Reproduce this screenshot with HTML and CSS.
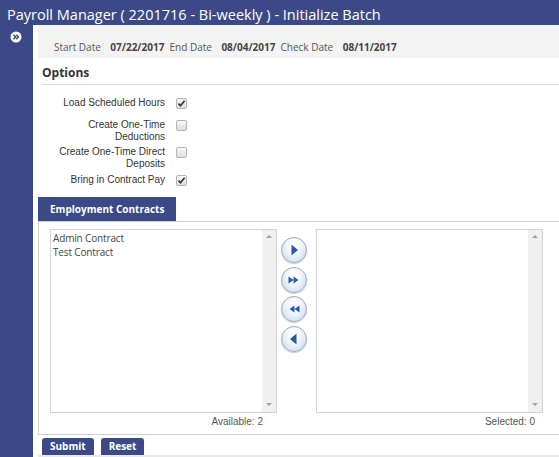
FILE: index.html
```html
<!DOCTYPE html>
<html>
<head>
<meta charset="utf-8">
<link rel="stylesheet" href="styles.css">
</head>
<body>
<div class="header">Payroll Manager ( 2201716 - Bi-weekly ) - Initialize Batch</div>
<div class="main">
  <div class="sidebar">
    <svg class="expand" width="12" height="12" viewBox="0 0 12 12"><circle cx="6" cy="6" r="5.5" fill="#fff"/><path d="M3.4 3.8 L5.6 6 L3.4 8.2 M6.2 3.8 L8.4 6 L6.2 8.2" stroke="#3b4a86" stroke-width="1.5" fill="none"/></svg>
  </div>
  <div class="content">
    <div class="dates">
      <span class="dlabel">Start Date</span><span class="dval">07/22/2017</span>
      <span class="dlabel">End Date</span><span class="dval">08/04/2017</span>
      <span class="dlabel">Check Date</span><span class="dval">08/11/2017</span>
    </div>
    <div class="options-title">Options</div>
    <div class="opts">
      <div class="opt r1"><div class="olabel">Load Scheduled Hours</div><span class="cb checked"><svg width="9" height="9" viewBox="0 0 9 9"><path d="M1.5 4.6 L3.5 6.8 L7.6 1.8" stroke="#333" stroke-width="1.7" fill="none"/></svg></span></div>
      <div class="opt r2"><div class="olabel">Create One-Time Deductions</div><span class="cb"></span></div>
      <div class="opt r3"><div class="olabel">Create One-Time Direct Deposits</div><span class="cb"></span></div>
      <div class="opt r4"><div class="olabel">Bring in Contract Pay</div><span class="cb checked"><svg width="9" height="9" viewBox="0 0 9 9"><path d="M1.5 4.6 L3.5 6.8 L7.6 1.8" stroke="#333" stroke-width="1.7" fill="none"/></svg></span></div>
    </div>
    <div class="tab">Employment Contracts</div>
    <div class="panel">
      <div class="lists">
        <div class="listcol">
          <div class="listbox">
            <div class="items">
              <div class="item">Admin Contract</div>
              <div class="item">Test Contract</div>
            </div>
            <div class="sbar"><span class="up"></span><span class="down"></span></div>
          </div>
          <div class="count left">Available: 2</div>
        </div>
        <div class="movers">
          <div class="rb"><svg width="26" height="26" viewBox="0 0 26 26"><path d="M10.5 7.5 L17 13 L10.5 18.5 Z" fill="#2758ad"/></svg></div>
          <div class="rb"><svg width="26" height="26" viewBox="0 0 26 26"><path d="M7.5 9.5 L12.5 13 L7.5 16.5 Z M12.5 9.5 L17.5 13 L12.5 16.5 Z" fill="#2758ad"/></svg></div>
          <div class="rb"><svg width="26" height="26" viewBox="0 0 26 26"><path d="M18.5 9.5 L13.5 13 L18.5 16.5 Z M13.5 9.5 L8.5 13 L13.5 16.5 Z" fill="#2758ad"/></svg></div>
          <div class="rb"><svg width="26" height="26" viewBox="0 0 26 26"><path d="M15.5 7.5 L9 13 L15.5 18.5 Z" fill="#2758ad"/></svg></div>
        </div>
        <div class="listcol">
          <div class="listbox">
            <div class="items"></div>
            <div class="sbar"><span class="up"></span><span class="down"></span></div>
          </div>
          <div class="count right">Selected: 0</div>
        </div>
      </div>
    </div>
    <div class="actions">
      <button class="btn">Submit</button>
      <button class="btn">Reset</button>
    </div>
    <div class="footer"></div>
  </div>
</div>
</body>
</html>
```
FILE: styles.css
```css
html, body {
  margin: 0;
  padding: 0;
  height: 457px;
  overflow: hidden;
  background: #fff;
}
body {
  font-family: "Open Sans", "Liberation Sans", sans-serif;
  color: #333;
}
.header {
  height: 25px;
  box-sizing: border-box;
  padding: 5px 0 0 7px;
  line-height: 19px;
  font-size: 14.5px;
  color: #fff;
  background: #3b4a86;
  white-space: nowrap;
}
.main {
  display: flex;
  height: 432px;
}
.sidebar {
  width: 33px;
  flex: none;
  background: #3b4a86;
}
.expand {
  display: block;
  margin: 6px 0 0 10px;
}
.content {
  flex: 1;
  padding-left: 5px;
  display: flex;
  flex-direction: column;
  min-width: 0;
}
.dates {
  flex: none;
  height: 33px;
  box-sizing: border-box;
  background: #f3f3f3;
  padding: 15px 0 0 16px;
  line-height: 14px;
  font-size: 10px;
  color: #555;
  white-space: nowrap;
}
.dlabel {
  margin-right: 9.5px;
}
.dval {
  font-weight: bold;
  color: #444;
  margin-right: 2.5px;
}
.options-title {
  flex: none;
  margin-left: 4px;
  padding: 7px 0 3px;
  line-height: 16px;
  font-size: 12px;
  font-weight: bold;
  color: #333;
  border-bottom: 1px solid #dcdcdc;
}
.opts {
  flex: none;
  padding-top: 12px;
  display: flex;
  flex-direction: column;
}
.opt {
  display: flex;
  align-items: flex-start;
}
.r1 { margin-bottom: 10px; }
.r3 { margin-top: 3px; }
.r4 { margin-top: 4px; }
.olabel {
  width: 110px;
  margin-left: 17px;
  text-align: right;
  font-family: "Liberation Sans", Arial, sans-serif;
  font-size: 10px;
  line-height: 12px;
  color: #333;
}
.cb {
  width: 11px;
  height: 11px;
  box-sizing: border-box;
  margin: 1px 0 0 11px;
  border: 1px solid #b4b4b4;
  border-radius: 2px;
  background: linear-gradient(#f7f7f7, #dedede);
  display: flex;
  align-items: center;
  justify-content: center;
}
.tab {
  flex: none;
  margin-top: 11px;
  width: 138px;
  height: 24px;
  box-sizing: border-box;
  background: #3b4a86;
  color: #fff;
  font-size: 10px;
  font-weight: bold;
  line-height: 24px;
  padding-left: 12px;
  white-space: nowrap;
}
.panel {
  flex: none;
  border-top: 1px solid #cfcfcf;
  border-left: 1px solid #cfcfcf;
  border-bottom: 1px solid #cfcfcf;
  padding: 7px 0 0 11px;
  height: 214px;
  box-sizing: border-box;
}
.lists {
  display: flex;
}
.listcol {
  width: 227px;
}
.listbox {
  height: 184px;
  box-sizing: border-box;
  border: 1px solid #d4d4d4;
  display: flex;
}
.items {
  flex: 1;
  padding: 1px 0 0 2px;
}
.item {
  font-size: 10px;
  line-height: 14px;
  letter-spacing: -0.15px;
  color: #444;
  white-space: nowrap;
}
.sbar {
  width: 14px;
  background: #f0f0f0;
  position: relative;
}
.up, .down {
  position: absolute;
  left: 4px;
  width: 0;
  height: 0;
  border-left: 3px solid transparent;
  border-right: 3px solid transparent;
}
.up {
  top: 5px;
  border-bottom: 3px solid #a0a0a0;
}
.down {
  bottom: 6px;
  border-top: 3px solid #a0a0a0;
}
.count {
  font-family: "Liberation Sans", Arial, sans-serif;
  font-size: 10px;
  line-height: 12px;
  margin-top: 3px;
  text-align: right;
  color: #555;
}
.count.left {
  padding-right: 14px;
}
.count.right {
  padding-right: 8px;
}
.movers {
  width: 39px;
  padding: 8px 0 0 4px;
  box-sizing: border-box;
  display: flex;
  flex-direction: column;
  gap: 3.5px;
}
.rb {
  flex: none;
  width: 26px;
  height: 26px;
  box-sizing: border-box;
  border-radius: 50%;
  border: 1px solid #9eabbf;
  background: radial-gradient(ellipse at 50% 28%, #ffffff 0%, #f3f7fc 40%, #d4e3f5 75%, #b9cfeb 100%);
  box-shadow: 0 1px 1px rgba(0,0,0,0.2);
  display: flex;
  align-items: center;
  justify-content: center;
  overflow: hidden;
}
.rb svg {
  flex: none;
  margin: -1px;
}
.actions {
  flex: none;
  display: flex;
  gap: 7px;
  padding: 3px 0 0 4px;
  height: 20px;
  box-sizing: border-box;
}
.btn {
  height: 17px;
  padding: 0 8px;
  border: none;
  border-radius: 3px 3px 0 0;
  background: #3b4a86;
  color: #fff;
  font-family: "Open Sans", "Liberation Sans", sans-serif;
  font-size: 10px;
  font-weight: bold;
  line-height: 17px;
}
.footer {
  flex: 1;
  background: #e9e9e9;
}
```
